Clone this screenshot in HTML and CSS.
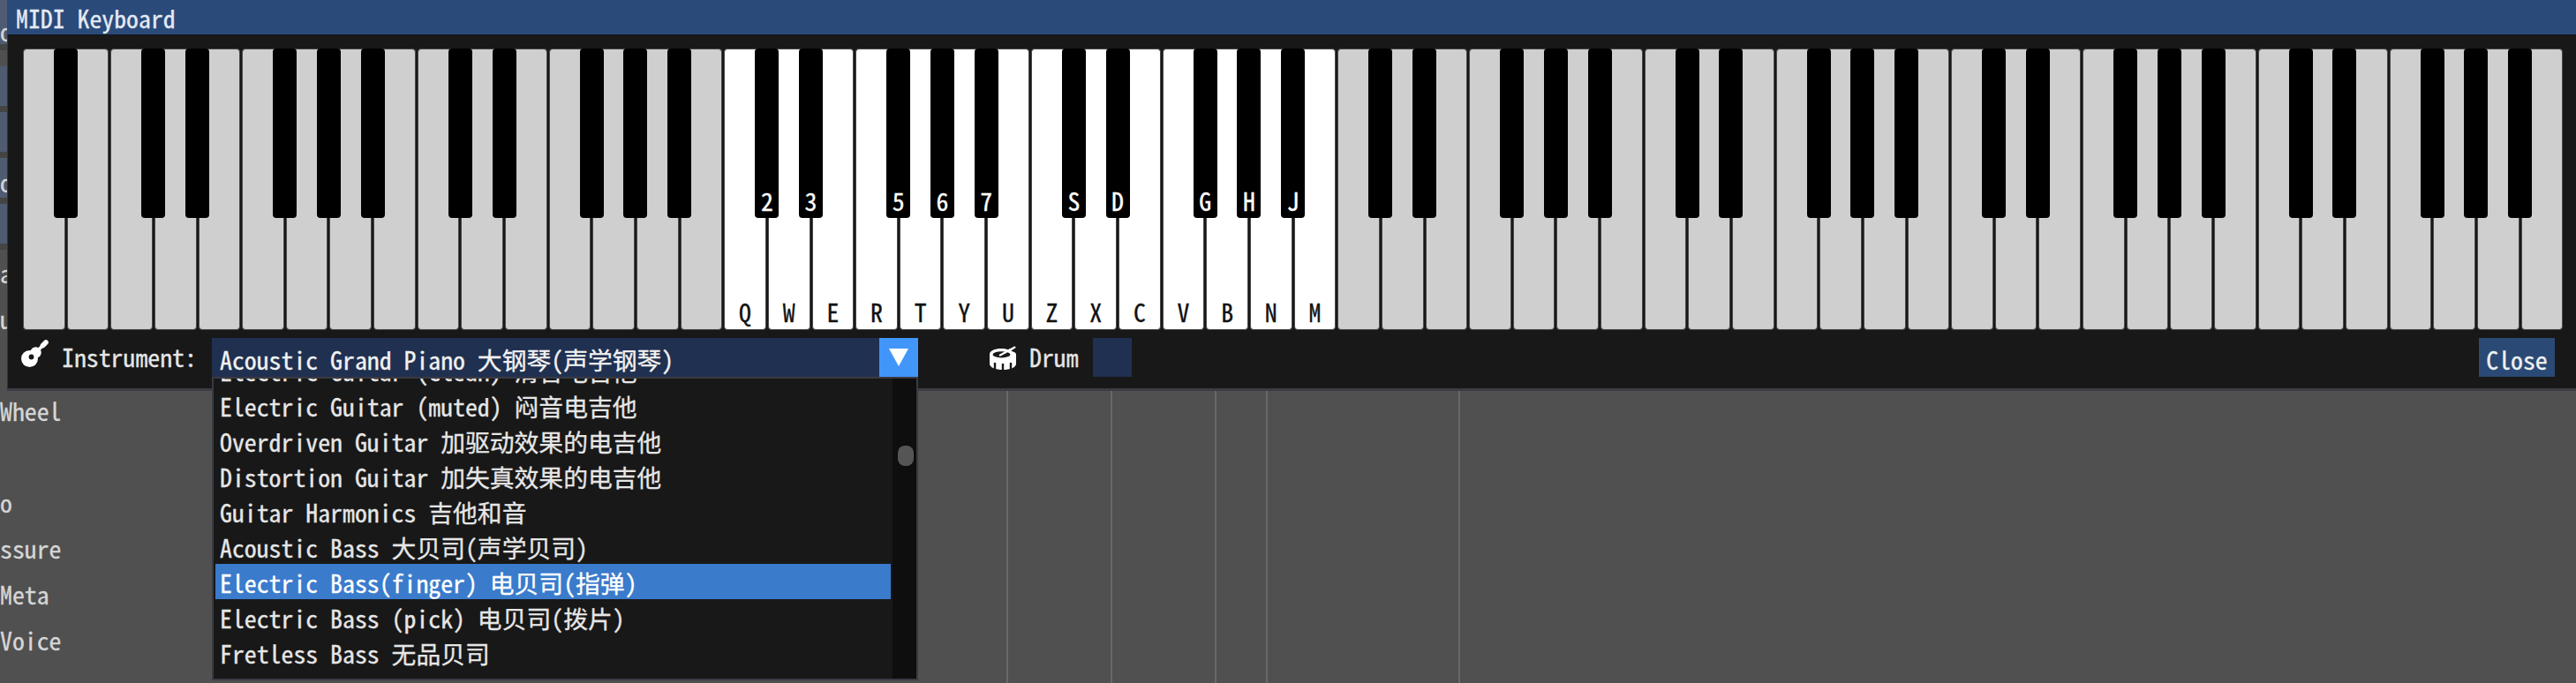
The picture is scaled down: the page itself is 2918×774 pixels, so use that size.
FILE: index.html
```html
<!DOCTYPE html>
<html lang="zh-CN">
<head>
    <meta charset="UTF-8">
    <title>MIDI Keyboard</title>
    <link rel="stylesheet" href="styles.css">
</head>
<body>
    <!-- fundo: trilhas e linhas de compasso -->
    <div class="tracks">
        <div class="track-labels">
            <div class="tl blue first"><span>o</span></div>
            <div class="tl blue"></div>
            <div class="tl blue"></div>
            <div class="tl blue"><span>o</span></div>
            <div class="tl blue"></div>
            <div class="tl gray"><span>a</span></div>
            <div class="tl gray"><span>u</span></div>
            <div class="tl gray"></div>
            <div class="tl gray"><span>Wheel</span></div>
            <div class="tl gray"></div>
            <div class="tl gray"><span>o</span></div>
            <div class="tl gray"><span>ssure</span></div>
            <div class="tl gray"><span>Meta</span></div>
            <div class="tl gray"><span>Voice</span></div>
        </div>
        <div class="bars">
            <div class="bar w1"></div>
            <div class="bar w2"></div>
            <div class="bar w3"></div>
            <div class="bar w4"></div>
            <div class="bar w5"></div>
        </div>
    </div>

    <div class="window">
        <div class="titlebar">MIDI Keyboard</div>
        <div class="window-body">
            <div class="keyboard">
                <div class="key"><i class="black"></i></div>
                <div class="key"></div>
                <div class="key"><i class="black"></i></div>
                <div class="key"><i class="black"></i></div>
                <div class="key"></div>
                <div class="key"><i class="black"></i></div>
                <div class="key"><i class="black"></i></div>
                <div class="key"><i class="black"></i></div>
                <div class="key"></div>
                <div class="key"><i class="black"></i></div>
                <div class="key"><i class="black"></i></div>
                <div class="key"></div>
                <div class="key"><i class="black"></i></div>
                <div class="key"><i class="black"></i></div>
                <div class="key"><i class="black"></i></div>
                <div class="key"></div>
                <div class="key on"><i class="black">2</i>Q</div>
                <div class="key on"><i class="black">3</i>W</div>
                <div class="key on">E</div>
                <div class="key on"><i class="black">5</i>R</div>
                <div class="key on"><i class="black">6</i>T</div>
                <div class="key on"><i class="black">7</i>Y</div>
                <div class="key on">U</div>
                <div class="key on"><i class="black">S</i>Z</div>
                <div class="key on"><i class="black">D</i>X</div>
                <div class="key on">C</div>
                <div class="key on"><i class="black">G</i>V</div>
                <div class="key on"><i class="black">H</i>B</div>
                <div class="key on"><i class="black">J</i>N</div>
                <div class="key on">M</div>
                <div class="key"><i class="black"></i></div>
                <div class="key"><i class="black"></i></div>
                <div class="key"></div>
                <div class="key"><i class="black"></i></div>
                <div class="key"><i class="black"></i></div>
                <div class="key"><i class="black"></i></div>
                <div class="key"></div>
                <div class="key"><i class="black"></i></div>
                <div class="key"><i class="black"></i></div>
                <div class="key"></div>
                <div class="key"><i class="black"></i></div>
                <div class="key"><i class="black"></i></div>
                <div class="key"><i class="black"></i></div>
                <div class="key"></div>
                <div class="key"><i class="black"></i></div>
                <div class="key"><i class="black"></i></div>
                <div class="key"></div>
                <div class="key"><i class="black"></i></div>
                <div class="key"><i class="black"></i></div>
                <div class="key"><i class="black"></i></div>
                <div class="key"></div>
                <div class="key"><i class="black"></i></div>
                <div class="key"><i class="black"></i></div>
                <div class="key"></div>
                <div class="key"><i class="black"></i></div>
                <div class="key"><i class="black"></i></div>
                <div class="key"><i class="black"></i></div>
                <div class="key"></div>
            </div>

            <div class="controls">
                <svg class="icon-guitar" viewBox="0 0 32 32" width="32" height="32">
                    <circle cx="10.500" cy="21.500" r="9.500" fill="#fff"/>
                    <circle cx="17.500" cy="14.500" r="6.200" fill="#fff"/>
                    <path d="M17 15 27 5" stroke="#fff" stroke-width="3.600" fill="none"/>
                    <path d="M25.500 6.500 29 3" stroke="#fff" stroke-width="5.600" stroke-linecap="round" fill="none"/>
                    <circle cx="12.500" cy="19.500" r="2.900" fill="#181818"/>
                </svg>
                <span class="lbl instrument">Instrument:</span>
                <div class="combo">
                    <div class="combo-value">Acoustic Grand Piano 大钢琴(声学钢琴)</div>
                    <div class="combo-arrow"><i></i></div>
                    <div class="dropdown">
                        <div class="list">
                            <div class="item">Electric Guitar (clean) 清音电吉他</div>
                            <div class="item">Electric Guitar (muted) 闷音电吉他</div>
                            <div class="item">Overdriven Guitar 加驱动效果的电吉他</div>
                            <div class="item">Distortion Guitar 加失真效果的电吉他</div>
                            <div class="item">Guitar Harmonics 吉他和音</div>
                            <div class="item">Acoustic Bass 大贝司(声学贝司)</div>
                            <div class="item sel">Electric Bass(finger) 电贝司(指弹)</div>
                            <div class="item">Electric Bass (pick) 电贝司(拨片)</div>
                            <div class="item">Fretless Bass 无品贝司</div>
                        </div>
                        <div class="scrollbar"><div class="grab"></div></div>
                    </div>
                </div>
                <svg class="icon-drum" viewBox="0 0 32 28" width="32" height="28">
                    <path d="M1 9.500C1 5.500 7 3 14 3c3 0 5.800.5 8 1.300L29.500.2l1.300 1.900-5.600 3.500C28.500 6.800 31 8 31 9.500v11c0 3.800-6.700 6.500-15 6.500S1 24.300 1 20.500Z" fill="#fff"/>
                    <ellipse cx="14.500" cy="9.800" rx="10" ry="3.600" fill="#181818"/>
                    <path d="m12 11 13-7" stroke="#fff" stroke-width="2.200" fill="none"/>
                    <path d="M7 19v7M16 20v7M25 19v7" stroke="#181818" stroke-width="2.400" fill="none"/>
                </svg>
                <span class="lbl drum">Drum</span>
                <div class="check"></div>
                <div class="close">Close</div>
            </div>
        </div>
    </div>
</body>
</html>
```

FILE: styles.css
```css
html, body {
    margin: 0;
    height: 100%;
    overflow: hidden;
}
body {
    background: #505050;
    color: #d6d6d6;
    font-family: "Noto Sans Mono CJK SC", "DejaVu Sans Mono", "Noto Sans CJK SC", monospace;
    font-size: 27.8px;
    -webkit-text-stroke: 0.3px;
    position: relative;
}

/* fundo */
.tracks {
    display: flex;
    height: 774px;
}
.track-labels {
    width: 70px;
    line-height: 52px;
}
.tl {
    height: 52px;
    white-space: nowrap;
}
.tl.blue {
    height: 45px;
    background: #4f5b70;
    margin-bottom: 7px;
    line-height: 54px;
    box-shadow: 0 7px 0 #444;
}
.tl.first {
    height: 50px;
    margin-bottom: 25px;
    line-height: 70px;
}
.tl.gray:nth-child(6) {
    margin-top: 6px;
}
.bars {
    display: flex;
    padding-left: 1070px;
}
.bar {
    border-left: 2px solid #686868;
}
.w1 { width: 116px; }
.w2 { width: 116px; }
.w3 { width: 56px; }
.w4 { width: 216px; }
.w5 { width: 0; }

/* janela do teclado */
.window {
    position: absolute;
    top: 0;
    left: 8px;
    right: 0;
    z-index: 5;
}
.titlebar {
    height: 39px;
    line-height: 40px;
    padding-left: 10px;
    background: #2a4a7a;
    color: #e4eaf4;
}
.window-body {
    background: #181818;
    border-left: 1px solid #33333a;
    border-bottom: 3px solid #3c3c44;
    height: 404px;
    padding: 16px 14px 0 16px;
    box-sizing: border-box;
}
.keyboard {
    display: flex;
    height: 319px;
}
.key {
    flex: 1;
    position: relative;
    margin: 0 1px;
    border: 1px solid #4a4a4a;
    border-radius: 4px;
    background: #cfcfcf;
    color: #111;
    display: flex;
    align-items: flex-end;
    justify-content: center;
    line-height: 40px;
}
.key.on {
    background: #fff;
}
.black {
    position: absolute;
    z-index: 1;
    top: -1px;
    right: -15.500px;
    width: 27px;
    height: 192px;
    background: #000;
    border-radius: 4px;
    color: #fff;
    font-style: normal;
    line-height: 40px;
    display: flex;
    align-items: flex-end;
    justify-content: center;
}

/* linha de controles */
.controls {
    display: flex;
    align-items: flex-start;
    margin-top: 9px;
    height: 44px;
    color: #e6e6e6;
}
.icon-guitar {
    margin-top: 2px;
    margin-left: -2px;
}
.lbl {
    line-height: 42px;
}
.instrument {
    margin-left: 15px;
    width: 170px;
}
.combo {
    position: relative;
    width: 800px;
    height: 44px;
    display: flex;
    background: #203050;
}
.combo-value {
    flex: 1;
    line-height: 48px;
    padding-left: 9px;
    color: #f2f2f2;
}
.combo-arrow {
    width: 44px;
    background: #4296fa;
    display: flex;
    align-items: center;
    justify-content: center;
}
.combo-arrow i {
    border-left: 11px solid transparent;
    border-right: 11px solid transparent;
    border-top: 20px solid #fff;
}
.dropdown {
    position: absolute;
    top: 44px;
    left: 0;
    width: 800px;
    height: 344px;
    box-sizing: border-box;
    border: 2px solid #3a3a42;
    background: #181818;
    display: flex;
}
.list {
    flex: 1;
    overflow: hidden;
    padding: 0 2px;
}
.item {
    height: 40px;
    line-height: 42px;
    padding-left: 5px;
    white-space: nowrap;
    color: #e6e6e6;
}
.item:first-child {
    margin-top: -30px;
}
.item.sel {
    background: #3a7bcc;
    color: #fff;
}
.scrollbar {
    width: 27px;
    background: #0e0e0e;
}
.grab {
    width: 18px;
    height: 23px;
    margin: 76px 0 0 6px;
    background: #555;
    border-radius: 8px;
}
.icon-drum {
    margin-left: 80px;
    margin-top: 9px;
}
.drum {
    margin-left: 14px;
    width: 72px;
}
.check {
    width: 44px;
    height: 44px;
    background: #203050;
}
.close {
    margin-left: auto;
    width: 86px;
    height: 44px;
    margin-right: 10px;
    background: #2a4a75;
    text-align: center;
    line-height: 48px;
    color: #f0f0f0;
}
```
